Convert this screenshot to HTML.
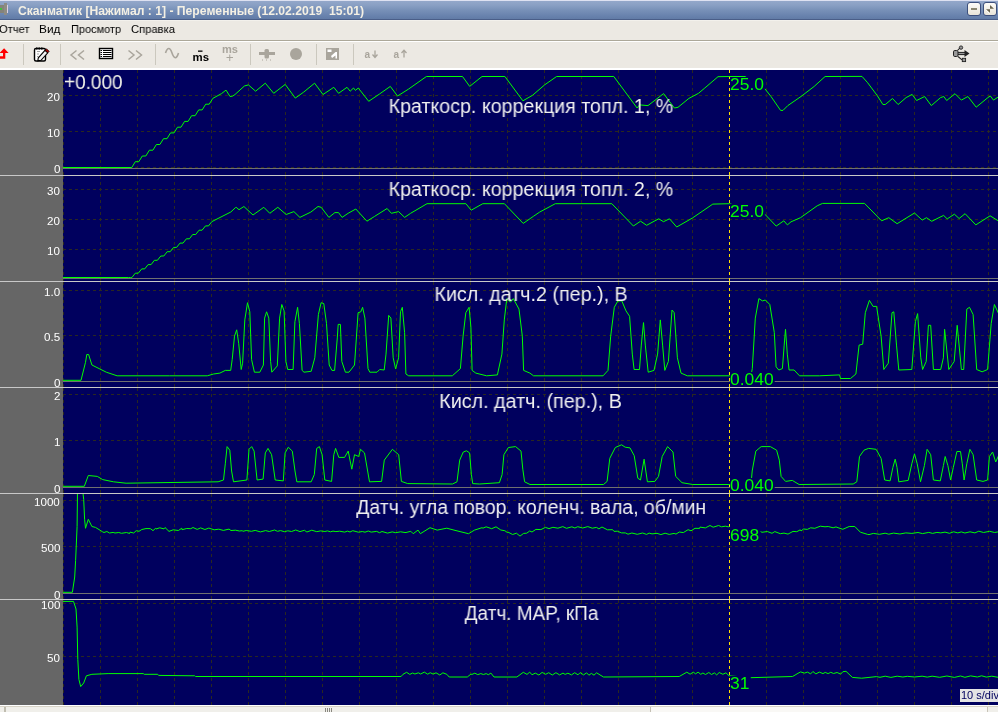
<!DOCTYPE html><html><head><meta charset="utf-8"><style>
*{margin:0;padding:0;box-sizing:border-box}
html,body{width:998px;height:712px;overflow:hidden;background:#ECE9E3;font-family:"Liberation Sans", sans-serif;position:relative}
.a{position:absolute}
.t{position:absolute;white-space:nowrap;line-height:1;will-change:transform}
.ttl{position:absolute;left:63px;width:935px;text-align:center;white-space:nowrap;line-height:1;font-size:20px;color:#f0f0f0}
.ttl span{display:inline-block;will-change:transform}
.val{position:absolute;left:730px;height:14px;padding-right:1px;overflow:visible;white-space:nowrap;line-height:1;font-size:16px;color:#00ff00;background:#00005e;transform-origin:0 0;transform:scaleX(1.09);will-change:transform}
.lab{position:absolute;right:938px;white-space:nowrap;line-height:1;font-size:11.6px;color:#fff;will-change:transform}
</style></head><body>
<div class="a" style="left:0;top:0;width:998px;height:20px;background:linear-gradient(#dde1f1 0px,#dde1f1 1px,#93a7ca 1px,#8aa0c4 5px,#7891b8 10px,#6882ad 16px,#617ba6 19px,#4a5e88 19px,#4a5e88 20px)"></div>
<div class="t" style="left:18px;top:5px;font-size:12px;font-weight:bold;color:#f4f0e4;transform-origin:0 0;transform:scaleX(1.013)">Сканматик [Нажимал : 1] - Переменные (12.02.2019&nbsp;&nbsp;15:01)</div>
<div class="a" style="left:0;top:5px;width:4px;height:8px;background:#85837a"></div><div class="a" style="left:4px;top:3px;width:3px;height:12px;background:#8e8c84"></div><div class="a" style="left:7px;top:5px;width:1px;height:8px;background:#ddd0e0"></div><div class="a" style="left:0;top:8px;width:2px;height:2px;background:#40c040"></div>
<div class="a" style="left:967px;top:2px;width:14px;height:14px;border:1px solid #3c4f7c;border-radius:3px;background:linear-gradient(#fdfcf8,#e8e4d8)"></div>
<div class="a" style="left:983px;top:2px;width:14px;height:14px;border:1px solid #3c4f7c;border-radius:3px;background:linear-gradient(#fdfcf8,#e8e4d8)"></div>
<div class="a" style="left:971px;top:8px;width:6px;height:2px;background:#8a8670"></div>
<svg class="a" style="left:983px;top:2px" width="14" height="14"><path d="M7 3 L11 6.8 L7 6.8 Z M3 7.2 L7 7.2 L7 10.8 Z" fill="#6a6450"/><path d="M3.2 8.2 L6.6 11.6" stroke="#fff" stroke-width="0.9"/></svg>
<div class="a" style="left:0;top:20px;width:998px;height:1px;background:#f3f1ec"></div>
<div class="a" style="left:0;top:40px;width:998px;height:1px;background:#aca899"></div>
<div class="a" style="left:0;top:41px;width:998px;height:1px;background:#ffffff"></div>
<div class="t" style="left:-1px;top:24px;font-size:11.5px;color:#000;transform-origin:0 0;transform:scaleX(0.97)">Отчет</div>
<div class="t" style="left:39px;top:24px;font-size:11.5px;color:#000;transform-origin:0 0;transform:scaleX(1.03)">Вид</div>
<div class="t" style="left:71px;top:24px;font-size:11.5px;color:#000;transform-origin:0 0;transform:scaleX(0.955)">Просмотр</div>
<div class="t" style="left:131px;top:24px;font-size:11.5px;color:#000;transform-origin:0 0;transform:scaleX(0.975)">Справка</div>
<div class="a" style="left:0;top:68px;width:998px;height:2px;background:#ffffff"></div>
<div class="a" style="left:23px;top:44px;width:1px;height:21px;background:#cbc8be"></div>
<div class="a" style="left:60px;top:44px;width:1px;height:21px;background:#cbc8be"></div>
<div class="a" style="left:155px;top:44px;width:1px;height:21px;background:#cbc8be"></div>
<div class="a" style="left:250px;top:44px;width:1px;height:21px;background:#cbc8be"></div>
<div class="a" style="left:316px;top:44px;width:1px;height:21px;background:#cbc8be"></div>
<div class="a" style="left:353px;top:44px;width:1px;height:21px;background:#cbc8be"></div>
<svg class="a" style="left:0;top:42px;will-change:transform" width="998" height="26"><path d="M4.1 6.2 L8.6 11 L5.3 11 L5.3 16.8 L-1 16.8 L-1 14.3 L3 14.3 L3 11 L-0.4 11 Z" fill="#ff0000"/><rect x="34.5" y="6.5" width="11" height="12.5" rx="1.5" fill="#ffffff" stroke="#000" stroke-width="1.4"/><path d="M36 5.5 h1.5 v2 h-1.5z M38.5 5.5 h1.5 v2 h-1.5z M41 5.5 h1.5 v2 h-1.5z" fill="#000"/><path d="M37 9.5 h3 M37 12 h2 M37 14.5 h1.5" stroke="#888" stroke-width="0.8"/><path d="M38.3 15.8 L45 8.3 L47.8 10.8 L41 18.3 L37.8 18.8 Z" fill="#f0f0f0" stroke="#000" stroke-width="1.1"/><path d="M45 8.3 L46.5 6.8 L49.3 9.3 L47.8 10.8 Z" fill="#a00000" stroke="#000" stroke-width="0.6"/><path d="M76.5 8.5 L71 13 L76.5 17.5 M84 8.5 L78.5 13 L84 17.5" fill="none" stroke="#a9a59c" stroke-width="1.5"/><path d="M128.5 8.5 L134 13 L128.5 17.5 M136 8.5 L141.5 13 L136 17.5" fill="none" stroke="#a9a59c" stroke-width="1.5"/><rect x="99.5" y="6.5" width="13" height="10" fill="#fff" stroke="#000" stroke-width="1.4"/><path d="M100.5 8.5 h11 M100.5 10.5 h11 M100.5 12.5 h11 M100.5 14.5 h11" stroke="#000" stroke-width="1"/><path d="M102.5 8 v7" stroke="#fff" stroke-width="1"/><path d="M165.5 11 C167.5 5, 170 5, 172 11 S176.5 17.5, 178.5 11" fill="none" stroke="#a9a59c" stroke-width="1.6"/><text x="192.5" y="18.5" font-family="Liberation Sans" font-weight="bold" font-size="11" fill="#000" textLength="16.5" lengthAdjust="spacingAndGlyphs">ms</text><rect x="198" y="8.5" width="4.5" height="1.3" fill="#000"/><text x="222" y="10.5" font-family="Liberation Sans" font-weight="bold" font-size="10.5" fill="#a9a59c" textLength="16" lengthAdjust="spacingAndGlyphs">ms</text><path d="M226.5 15.5 h6.5 M229.75 12.5 v6.5" stroke="#a9a59c" stroke-width="1"/><rect x="259" y="10" width="16" height="3" fill="#a9a59c"/><rect x="264.5" y="7" width="4.5" height="9.5" rx="1.5" fill="#a9a59c"/><path d="M262 18 h1 M266 18 h1 M270 18 h1" stroke="#a9a59c" stroke-width="1"/><circle cx="296" cy="12" r="6" fill="#a9a59c"/><rect x="326" y="6" width="13" height="12" fill="#a9a59c"/><path d="M327.5 7.5 h4 v2.5 h-4z M331 14 L335.5 10 h1.5 v6.5 h-1.5 v-3 L332 16 Z" fill="#fff"/><text x="364.5" y="15.8" font-family="Liberation Sans" font-weight="bold" font-size="10" fill="#a9a59c">a</text><path d="M375 8.5 v6.5 M372.5 12.5 L375 15.5 L377.5 12.5" fill="none" stroke="#a9a59c" stroke-width="1.3"/><text x="393.5" y="15.8" font-family="Liberation Sans" font-weight="bold" font-size="10" fill="#a9a59c">a</text><path d="M404 8.5 v7 M401.5 11 L404 8.3 L406.5 11" fill="none" stroke="#a9a59c" stroke-width="1.3"/><g><path d="M957 11.5 H965.5" stroke="#222" stroke-width="3.2"/><path d="M957 11.5 H965.5" stroke="#999" stroke-width="1.2"/><path d="M964.5 8 L969.5 11.5 L964.5 15 Z" fill="#222"/><rect x="953.5" y="8.5" width="4.5" height="6" rx="1.3" fill="#999" stroke="#222" stroke-width="1"/><path d="M957.5 8.5 L960 5.8" stroke="#222" stroke-width="1.1"/><circle cx="961" cy="5.6" r="1.7" fill="#999" stroke="#222" stroke-width="0.9"/><path d="M958 14.5 L962 17.8" stroke="#222" stroke-width="1.1"/><rect x="962.3" y="16.3" width="3.3" height="3.3" fill="#999" stroke="#222" stroke-width="0.9"/></g></svg>
<div class="a" style="left:0;top:70px;width:63px;height:635px;background:#666666"></div>
<div class="a" style="left:63px;top:70px;width:935px;height:635px;background:#00005e"></div>
<svg class="a" style="left:0;top:0" width="998" height="712"><g shape-rendering="crispEdges"><line x1="63.5" y1="70" x2="63.5" y2="175" stroke="#2a2820" stroke-width="1" stroke-dasharray="3 3"/><line x1="100.5" y1="70" x2="100.5" y2="175" stroke="#2a2820" stroke-width="1" stroke-dasharray="3 3"/><line x1="137.5" y1="70" x2="137.5" y2="175" stroke="#2a2820" stroke-width="1" stroke-dasharray="3 3"/><line x1="174.5" y1="70" x2="174.5" y2="175" stroke="#2a2820" stroke-width="1" stroke-dasharray="3 3"/><line x1="211.5" y1="70" x2="211.5" y2="175" stroke="#2a2820" stroke-width="1" stroke-dasharray="3 3"/><line x1="248.5" y1="70" x2="248.5" y2="175" stroke="#2a2820" stroke-width="1" stroke-dasharray="3 3"/><line x1="285.5" y1="70" x2="285.5" y2="175" stroke="#2a2820" stroke-width="1" stroke-dasharray="3 3"/><line x1="322.5" y1="70" x2="322.5" y2="175" stroke="#2a2820" stroke-width="1" stroke-dasharray="3 3"/><line x1="359.5" y1="70" x2="359.5" y2="175" stroke="#2a2820" stroke-width="1" stroke-dasharray="3 3"/><line x1="396.5" y1="70" x2="396.5" y2="175" stroke="#2a2820" stroke-width="1" stroke-dasharray="3 3"/><line x1="433.5" y1="70" x2="433.5" y2="175" stroke="#2a2820" stroke-width="1" stroke-dasharray="3 3"/><line x1="470.5" y1="70" x2="470.5" y2="175" stroke="#2a2820" stroke-width="1" stroke-dasharray="3 3"/><line x1="507.5" y1="70" x2="507.5" y2="175" stroke="#2a2820" stroke-width="1" stroke-dasharray="3 3"/><line x1="544.5" y1="70" x2="544.5" y2="175" stroke="#2a2820" stroke-width="1" stroke-dasharray="3 3"/><line x1="581.5" y1="70" x2="581.5" y2="175" stroke="#2a2820" stroke-width="1" stroke-dasharray="3 3"/><line x1="618.5" y1="70" x2="618.5" y2="175" stroke="#2a2820" stroke-width="1" stroke-dasharray="3 3"/><line x1="655.5" y1="70" x2="655.5" y2="175" stroke="#2a2820" stroke-width="1" stroke-dasharray="3 3"/><line x1="692.5" y1="70" x2="692.5" y2="175" stroke="#2a2820" stroke-width="1" stroke-dasharray="3 3"/><line x1="729.5" y1="70" x2="729.5" y2="175" stroke="#2a2820" stroke-width="1" stroke-dasharray="3 3"/><line x1="766.5" y1="70" x2="766.5" y2="175" stroke="#2a2820" stroke-width="1" stroke-dasharray="3 3"/><line x1="803.5" y1="70" x2="803.5" y2="175" stroke="#2a2820" stroke-width="1" stroke-dasharray="3 3"/><line x1="840.5" y1="70" x2="840.5" y2="175" stroke="#2a2820" stroke-width="1" stroke-dasharray="3 3"/><line x1="877.5" y1="70" x2="877.5" y2="175" stroke="#2a2820" stroke-width="1" stroke-dasharray="3 3"/><line x1="914.5" y1="70" x2="914.5" y2="175" stroke="#2a2820" stroke-width="1" stroke-dasharray="3 3"/><line x1="951.5" y1="70" x2="951.5" y2="175" stroke="#2a2820" stroke-width="1" stroke-dasharray="3 3"/><line x1="988.5" y1="70" x2="988.5" y2="175" stroke="#2a2820" stroke-width="1" stroke-dasharray="3 3"/><line x1="63" y1="95.5" x2="998" y2="95.5" stroke="#2a2820" stroke-width="1" stroke-dasharray="3 3"/><line x1="63" y1="131.5" x2="998" y2="131.5" stroke="#2a2820" stroke-width="1" stroke-dasharray="3 3"/><line x1="63" y1="167.5" x2="998" y2="167.5" stroke="#2a2820" stroke-width="1" stroke-dasharray="3 3"/><line x1="63" y1="168.5" x2="998" y2="168.5" stroke="#707070" stroke-width="1"/><line x1="0" y1="175.5" x2="998" y2="175.5" stroke="#c8c8c8" stroke-width="1"/><line x1="729.5" y1="70" x2="729.5" y2="175" stroke="#ffe000" stroke-width="1" stroke-dasharray="3 3"/><line x1="63.5" y1="176" x2="63.5" y2="281" stroke="#2a2820" stroke-width="1" stroke-dasharray="3 3"/><line x1="100.5" y1="176" x2="100.5" y2="281" stroke="#2a2820" stroke-width="1" stroke-dasharray="3 3"/><line x1="137.5" y1="176" x2="137.5" y2="281" stroke="#2a2820" stroke-width="1" stroke-dasharray="3 3"/><line x1="174.5" y1="176" x2="174.5" y2="281" stroke="#2a2820" stroke-width="1" stroke-dasharray="3 3"/><line x1="211.5" y1="176" x2="211.5" y2="281" stroke="#2a2820" stroke-width="1" stroke-dasharray="3 3"/><line x1="248.5" y1="176" x2="248.5" y2="281" stroke="#2a2820" stroke-width="1" stroke-dasharray="3 3"/><line x1="285.5" y1="176" x2="285.5" y2="281" stroke="#2a2820" stroke-width="1" stroke-dasharray="3 3"/><line x1="322.5" y1="176" x2="322.5" y2="281" stroke="#2a2820" stroke-width="1" stroke-dasharray="3 3"/><line x1="359.5" y1="176" x2="359.5" y2="281" stroke="#2a2820" stroke-width="1" stroke-dasharray="3 3"/><line x1="396.5" y1="176" x2="396.5" y2="281" stroke="#2a2820" stroke-width="1" stroke-dasharray="3 3"/><line x1="433.5" y1="176" x2="433.5" y2="281" stroke="#2a2820" stroke-width="1" stroke-dasharray="3 3"/><line x1="470.5" y1="176" x2="470.5" y2="281" stroke="#2a2820" stroke-width="1" stroke-dasharray="3 3"/><line x1="507.5" y1="176" x2="507.5" y2="281" stroke="#2a2820" stroke-width="1" stroke-dasharray="3 3"/><line x1="544.5" y1="176" x2="544.5" y2="281" stroke="#2a2820" stroke-width="1" stroke-dasharray="3 3"/><line x1="581.5" y1="176" x2="581.5" y2="281" stroke="#2a2820" stroke-width="1" stroke-dasharray="3 3"/><line x1="618.5" y1="176" x2="618.5" y2="281" stroke="#2a2820" stroke-width="1" stroke-dasharray="3 3"/><line x1="655.5" y1="176" x2="655.5" y2="281" stroke="#2a2820" stroke-width="1" stroke-dasharray="3 3"/><line x1="692.5" y1="176" x2="692.5" y2="281" stroke="#2a2820" stroke-width="1" stroke-dasharray="3 3"/><line x1="729.5" y1="176" x2="729.5" y2="281" stroke="#2a2820" stroke-width="1" stroke-dasharray="3 3"/><line x1="766.5" y1="176" x2="766.5" y2="281" stroke="#2a2820" stroke-width="1" stroke-dasharray="3 3"/><line x1="803.5" y1="176" x2="803.5" y2="281" stroke="#2a2820" stroke-width="1" stroke-dasharray="3 3"/><line x1="840.5" y1="176" x2="840.5" y2="281" stroke="#2a2820" stroke-width="1" stroke-dasharray="3 3"/><line x1="877.5" y1="176" x2="877.5" y2="281" stroke="#2a2820" stroke-width="1" stroke-dasharray="3 3"/><line x1="914.5" y1="176" x2="914.5" y2="281" stroke="#2a2820" stroke-width="1" stroke-dasharray="3 3"/><line x1="951.5" y1="176" x2="951.5" y2="281" stroke="#2a2820" stroke-width="1" stroke-dasharray="3 3"/><line x1="988.5" y1="176" x2="988.5" y2="281" stroke="#2a2820" stroke-width="1" stroke-dasharray="3 3"/><line x1="63" y1="189.5" x2="998" y2="189.5" stroke="#2a2820" stroke-width="1" stroke-dasharray="3 3"/><line x1="63" y1="219.5" x2="998" y2="219.5" stroke="#2a2820" stroke-width="1" stroke-dasharray="3 3"/><line x1="63" y1="249.5" x2="998" y2="249.5" stroke="#2a2820" stroke-width="1" stroke-dasharray="3 3"/><line x1="63" y1="278.5" x2="998" y2="278.5" stroke="#707070" stroke-width="1"/><line x1="0" y1="281.5" x2="998" y2="281.5" stroke="#c8c8c8" stroke-width="1"/><line x1="729.5" y1="176" x2="729.5" y2="281" stroke="#ffe000" stroke-width="1" stroke-dasharray="3 3"/><line x1="63.5" y1="282" x2="63.5" y2="387" stroke="#2a2820" stroke-width="1" stroke-dasharray="3 3"/><line x1="100.5" y1="282" x2="100.5" y2="387" stroke="#2a2820" stroke-width="1" stroke-dasharray="3 3"/><line x1="137.5" y1="282" x2="137.5" y2="387" stroke="#2a2820" stroke-width="1" stroke-dasharray="3 3"/><line x1="174.5" y1="282" x2="174.5" y2="387" stroke="#2a2820" stroke-width="1" stroke-dasharray="3 3"/><line x1="211.5" y1="282" x2="211.5" y2="387" stroke="#2a2820" stroke-width="1" stroke-dasharray="3 3"/><line x1="248.5" y1="282" x2="248.5" y2="387" stroke="#2a2820" stroke-width="1" stroke-dasharray="3 3"/><line x1="285.5" y1="282" x2="285.5" y2="387" stroke="#2a2820" stroke-width="1" stroke-dasharray="3 3"/><line x1="322.5" y1="282" x2="322.5" y2="387" stroke="#2a2820" stroke-width="1" stroke-dasharray="3 3"/><line x1="359.5" y1="282" x2="359.5" y2="387" stroke="#2a2820" stroke-width="1" stroke-dasharray="3 3"/><line x1="396.5" y1="282" x2="396.5" y2="387" stroke="#2a2820" stroke-width="1" stroke-dasharray="3 3"/><line x1="433.5" y1="282" x2="433.5" y2="387" stroke="#2a2820" stroke-width="1" stroke-dasharray="3 3"/><line x1="470.5" y1="282" x2="470.5" y2="387" stroke="#2a2820" stroke-width="1" stroke-dasharray="3 3"/><line x1="507.5" y1="282" x2="507.5" y2="387" stroke="#2a2820" stroke-width="1" stroke-dasharray="3 3"/><line x1="544.5" y1="282" x2="544.5" y2="387" stroke="#2a2820" stroke-width="1" stroke-dasharray="3 3"/><line x1="581.5" y1="282" x2="581.5" y2="387" stroke="#2a2820" stroke-width="1" stroke-dasharray="3 3"/><line x1="618.5" y1="282" x2="618.5" y2="387" stroke="#2a2820" stroke-width="1" stroke-dasharray="3 3"/><line x1="655.5" y1="282" x2="655.5" y2="387" stroke="#2a2820" stroke-width="1" stroke-dasharray="3 3"/><line x1="692.5" y1="282" x2="692.5" y2="387" stroke="#2a2820" stroke-width="1" stroke-dasharray="3 3"/><line x1="729.5" y1="282" x2="729.5" y2="387" stroke="#2a2820" stroke-width="1" stroke-dasharray="3 3"/><line x1="766.5" y1="282" x2="766.5" y2="387" stroke="#2a2820" stroke-width="1" stroke-dasharray="3 3"/><line x1="803.5" y1="282" x2="803.5" y2="387" stroke="#2a2820" stroke-width="1" stroke-dasharray="3 3"/><line x1="840.5" y1="282" x2="840.5" y2="387" stroke="#2a2820" stroke-width="1" stroke-dasharray="3 3"/><line x1="877.5" y1="282" x2="877.5" y2="387" stroke="#2a2820" stroke-width="1" stroke-dasharray="3 3"/><line x1="914.5" y1="282" x2="914.5" y2="387" stroke="#2a2820" stroke-width="1" stroke-dasharray="3 3"/><line x1="951.5" y1="282" x2="951.5" y2="387" stroke="#2a2820" stroke-width="1" stroke-dasharray="3 3"/><line x1="988.5" y1="282" x2="988.5" y2="387" stroke="#2a2820" stroke-width="1" stroke-dasharray="3 3"/><line x1="63" y1="290.5" x2="998" y2="290.5" stroke="#2a2820" stroke-width="1" stroke-dasharray="3 3"/><line x1="63" y1="335.5" x2="998" y2="335.5" stroke="#2a2820" stroke-width="1" stroke-dasharray="3 3"/><line x1="63" y1="381.5" x2="998" y2="381.5" stroke="#2a2820" stroke-width="1" stroke-dasharray="3 3"/><line x1="63" y1="381.5" x2="998" y2="381.5" stroke="#707070" stroke-width="1"/><line x1="0" y1="387.5" x2="998" y2="387.5" stroke="#c8c8c8" stroke-width="1"/><line x1="729.5" y1="282" x2="729.5" y2="387" stroke="#ffe000" stroke-width="1" stroke-dasharray="3 3"/><line x1="63.5" y1="388" x2="63.5" y2="493" stroke="#2a2820" stroke-width="1" stroke-dasharray="3 3"/><line x1="100.5" y1="388" x2="100.5" y2="493" stroke="#2a2820" stroke-width="1" stroke-dasharray="3 3"/><line x1="137.5" y1="388" x2="137.5" y2="493" stroke="#2a2820" stroke-width="1" stroke-dasharray="3 3"/><line x1="174.5" y1="388" x2="174.5" y2="493" stroke="#2a2820" stroke-width="1" stroke-dasharray="3 3"/><line x1="211.5" y1="388" x2="211.5" y2="493" stroke="#2a2820" stroke-width="1" stroke-dasharray="3 3"/><line x1="248.5" y1="388" x2="248.5" y2="493" stroke="#2a2820" stroke-width="1" stroke-dasharray="3 3"/><line x1="285.5" y1="388" x2="285.5" y2="493" stroke="#2a2820" stroke-width="1" stroke-dasharray="3 3"/><line x1="322.5" y1="388" x2="322.5" y2="493" stroke="#2a2820" stroke-width="1" stroke-dasharray="3 3"/><line x1="359.5" y1="388" x2="359.5" y2="493" stroke="#2a2820" stroke-width="1" stroke-dasharray="3 3"/><line x1="396.5" y1="388" x2="396.5" y2="493" stroke="#2a2820" stroke-width="1" stroke-dasharray="3 3"/><line x1="433.5" y1="388" x2="433.5" y2="493" stroke="#2a2820" stroke-width="1" stroke-dasharray="3 3"/><line x1="470.5" y1="388" x2="470.5" y2="493" stroke="#2a2820" stroke-width="1" stroke-dasharray="3 3"/><line x1="507.5" y1="388" x2="507.5" y2="493" stroke="#2a2820" stroke-width="1" stroke-dasharray="3 3"/><line x1="544.5" y1="388" x2="544.5" y2="493" stroke="#2a2820" stroke-width="1" stroke-dasharray="3 3"/><line x1="581.5" y1="388" x2="581.5" y2="493" stroke="#2a2820" stroke-width="1" stroke-dasharray="3 3"/><line x1="618.5" y1="388" x2="618.5" y2="493" stroke="#2a2820" stroke-width="1" stroke-dasharray="3 3"/><line x1="655.5" y1="388" x2="655.5" y2="493" stroke="#2a2820" stroke-width="1" stroke-dasharray="3 3"/><line x1="692.5" y1="388" x2="692.5" y2="493" stroke="#2a2820" stroke-width="1" stroke-dasharray="3 3"/><line x1="729.5" y1="388" x2="729.5" y2="493" stroke="#2a2820" stroke-width="1" stroke-dasharray="3 3"/><line x1="766.5" y1="388" x2="766.5" y2="493" stroke="#2a2820" stroke-width="1" stroke-dasharray="3 3"/><line x1="803.5" y1="388" x2="803.5" y2="493" stroke="#2a2820" stroke-width="1" stroke-dasharray="3 3"/><line x1="840.5" y1="388" x2="840.5" y2="493" stroke="#2a2820" stroke-width="1" stroke-dasharray="3 3"/><line x1="877.5" y1="388" x2="877.5" y2="493" stroke="#2a2820" stroke-width="1" stroke-dasharray="3 3"/><line x1="914.5" y1="388" x2="914.5" y2="493" stroke="#2a2820" stroke-width="1" stroke-dasharray="3 3"/><line x1="951.5" y1="388" x2="951.5" y2="493" stroke="#2a2820" stroke-width="1" stroke-dasharray="3 3"/><line x1="988.5" y1="388" x2="988.5" y2="493" stroke="#2a2820" stroke-width="1" stroke-dasharray="3 3"/><line x1="63" y1="394.5" x2="998" y2="394.5" stroke="#2a2820" stroke-width="1" stroke-dasharray="3 3"/><line x1="63" y1="440.5" x2="998" y2="440.5" stroke="#2a2820" stroke-width="1" stroke-dasharray="3 3"/><line x1="63" y1="487.5" x2="998" y2="487.5" stroke="#2a2820" stroke-width="1" stroke-dasharray="3 3"/><line x1="63" y1="487.5" x2="998" y2="487.5" stroke="#707070" stroke-width="1"/><line x1="0" y1="493.5" x2="998" y2="493.5" stroke="#c8c8c8" stroke-width="1"/><line x1="729.5" y1="388" x2="729.5" y2="493" stroke="#ffe000" stroke-width="1" stroke-dasharray="3 3"/><line x1="63.5" y1="494" x2="63.5" y2="599" stroke="#2a2820" stroke-width="1" stroke-dasharray="3 3"/><line x1="100.5" y1="494" x2="100.5" y2="599" stroke="#2a2820" stroke-width="1" stroke-dasharray="3 3"/><line x1="137.5" y1="494" x2="137.5" y2="599" stroke="#2a2820" stroke-width="1" stroke-dasharray="3 3"/><line x1="174.5" y1="494" x2="174.5" y2="599" stroke="#2a2820" stroke-width="1" stroke-dasharray="3 3"/><line x1="211.5" y1="494" x2="211.5" y2="599" stroke="#2a2820" stroke-width="1" stroke-dasharray="3 3"/><line x1="248.5" y1="494" x2="248.5" y2="599" stroke="#2a2820" stroke-width="1" stroke-dasharray="3 3"/><line x1="285.5" y1="494" x2="285.5" y2="599" stroke="#2a2820" stroke-width="1" stroke-dasharray="3 3"/><line x1="322.5" y1="494" x2="322.5" y2="599" stroke="#2a2820" stroke-width="1" stroke-dasharray="3 3"/><line x1="359.5" y1="494" x2="359.5" y2="599" stroke="#2a2820" stroke-width="1" stroke-dasharray="3 3"/><line x1="396.5" y1="494" x2="396.5" y2="599" stroke="#2a2820" stroke-width="1" stroke-dasharray="3 3"/><line x1="433.5" y1="494" x2="433.5" y2="599" stroke="#2a2820" stroke-width="1" stroke-dasharray="3 3"/><line x1="470.5" y1="494" x2="470.5" y2="599" stroke="#2a2820" stroke-width="1" stroke-dasharray="3 3"/><line x1="507.5" y1="494" x2="507.5" y2="599" stroke="#2a2820" stroke-width="1" stroke-dasharray="3 3"/><line x1="544.5" y1="494" x2="544.5" y2="599" stroke="#2a2820" stroke-width="1" stroke-dasharray="3 3"/><line x1="581.5" y1="494" x2="581.5" y2="599" stroke="#2a2820" stroke-width="1" stroke-dasharray="3 3"/><line x1="618.5" y1="494" x2="618.5" y2="599" stroke="#2a2820" stroke-width="1" stroke-dasharray="3 3"/><line x1="655.5" y1="494" x2="655.5" y2="599" stroke="#2a2820" stroke-width="1" stroke-dasharray="3 3"/><line x1="692.5" y1="494" x2="692.5" y2="599" stroke="#2a2820" stroke-width="1" stroke-dasharray="3 3"/><line x1="729.5" y1="494" x2="729.5" y2="599" stroke="#2a2820" stroke-width="1" stroke-dasharray="3 3"/><line x1="766.5" y1="494" x2="766.5" y2="599" stroke="#2a2820" stroke-width="1" stroke-dasharray="3 3"/><line x1="803.5" y1="494" x2="803.5" y2="599" stroke="#2a2820" stroke-width="1" stroke-dasharray="3 3"/><line x1="840.5" y1="494" x2="840.5" y2="599" stroke="#2a2820" stroke-width="1" stroke-dasharray="3 3"/><line x1="877.5" y1="494" x2="877.5" y2="599" stroke="#2a2820" stroke-width="1" stroke-dasharray="3 3"/><line x1="914.5" y1="494" x2="914.5" y2="599" stroke="#2a2820" stroke-width="1" stroke-dasharray="3 3"/><line x1="951.5" y1="494" x2="951.5" y2="599" stroke="#2a2820" stroke-width="1" stroke-dasharray="3 3"/><line x1="988.5" y1="494" x2="988.5" y2="599" stroke="#2a2820" stroke-width="1" stroke-dasharray="3 3"/><line x1="63" y1="500.5" x2="998" y2="500.5" stroke="#2a2820" stroke-width="1" stroke-dasharray="3 3"/><line x1="63" y1="546.5" x2="998" y2="546.5" stroke="#2a2820" stroke-width="1" stroke-dasharray="3 3"/><line x1="63" y1="593.5" x2="998" y2="593.5" stroke="#2a2820" stroke-width="1" stroke-dasharray="3 3"/><line x1="63" y1="593.5" x2="998" y2="593.5" stroke="#707070" stroke-width="1"/><line x1="0" y1="599.5" x2="998" y2="599.5" stroke="#c8c8c8" stroke-width="1"/><line x1="729.5" y1="494" x2="729.5" y2="599" stroke="#ffe000" stroke-width="1" stroke-dasharray="3 3"/><line x1="63.5" y1="600" x2="63.5" y2="705" stroke="#2a2820" stroke-width="1" stroke-dasharray="3 3"/><line x1="100.5" y1="600" x2="100.5" y2="705" stroke="#2a2820" stroke-width="1" stroke-dasharray="3 3"/><line x1="137.5" y1="600" x2="137.5" y2="705" stroke="#2a2820" stroke-width="1" stroke-dasharray="3 3"/><line x1="174.5" y1="600" x2="174.5" y2="705" stroke="#2a2820" stroke-width="1" stroke-dasharray="3 3"/><line x1="211.5" y1="600" x2="211.5" y2="705" stroke="#2a2820" stroke-width="1" stroke-dasharray="3 3"/><line x1="248.5" y1="600" x2="248.5" y2="705" stroke="#2a2820" stroke-width="1" stroke-dasharray="3 3"/><line x1="285.5" y1="600" x2="285.5" y2="705" stroke="#2a2820" stroke-width="1" stroke-dasharray="3 3"/><line x1="322.5" y1="600" x2="322.5" y2="705" stroke="#2a2820" stroke-width="1" stroke-dasharray="3 3"/><line x1="359.5" y1="600" x2="359.5" y2="705" stroke="#2a2820" stroke-width="1" stroke-dasharray="3 3"/><line x1="396.5" y1="600" x2="396.5" y2="705" stroke="#2a2820" stroke-width="1" stroke-dasharray="3 3"/><line x1="433.5" y1="600" x2="433.5" y2="705" stroke="#2a2820" stroke-width="1" stroke-dasharray="3 3"/><line x1="470.5" y1="600" x2="470.5" y2="705" stroke="#2a2820" stroke-width="1" stroke-dasharray="3 3"/><line x1="507.5" y1="600" x2="507.5" y2="705" stroke="#2a2820" stroke-width="1" stroke-dasharray="3 3"/><line x1="544.5" y1="600" x2="544.5" y2="705" stroke="#2a2820" stroke-width="1" stroke-dasharray="3 3"/><line x1="581.5" y1="600" x2="581.5" y2="705" stroke="#2a2820" stroke-width="1" stroke-dasharray="3 3"/><line x1="618.5" y1="600" x2="618.5" y2="705" stroke="#2a2820" stroke-width="1" stroke-dasharray="3 3"/><line x1="655.5" y1="600" x2="655.5" y2="705" stroke="#2a2820" stroke-width="1" stroke-dasharray="3 3"/><line x1="692.5" y1="600" x2="692.5" y2="705" stroke="#2a2820" stroke-width="1" stroke-dasharray="3 3"/><line x1="729.5" y1="600" x2="729.5" y2="705" stroke="#2a2820" stroke-width="1" stroke-dasharray="3 3"/><line x1="766.5" y1="600" x2="766.5" y2="705" stroke="#2a2820" stroke-width="1" stroke-dasharray="3 3"/><line x1="803.5" y1="600" x2="803.5" y2="705" stroke="#2a2820" stroke-width="1" stroke-dasharray="3 3"/><line x1="840.5" y1="600" x2="840.5" y2="705" stroke="#2a2820" stroke-width="1" stroke-dasharray="3 3"/><line x1="877.5" y1="600" x2="877.5" y2="705" stroke="#2a2820" stroke-width="1" stroke-dasharray="3 3"/><line x1="914.5" y1="600" x2="914.5" y2="705" stroke="#2a2820" stroke-width="1" stroke-dasharray="3 3"/><line x1="951.5" y1="600" x2="951.5" y2="705" stroke="#2a2820" stroke-width="1" stroke-dasharray="3 3"/><line x1="988.5" y1="600" x2="988.5" y2="705" stroke="#2a2820" stroke-width="1" stroke-dasharray="3 3"/><line x1="63" y1="603.5" x2="998" y2="603.5" stroke="#2a2820" stroke-width="1" stroke-dasharray="3 3"/><line x1="63" y1="656.5" x2="998" y2="656.5" stroke="#2a2820" stroke-width="1" stroke-dasharray="3 3"/><line x1="729.5" y1="600" x2="729.5" y2="705" stroke="#ffe000" stroke-width="1" stroke-dasharray="3 3"/></g><defs><clipPath id="c0"><rect x="63" y="70" width="935" height="105"/></clipPath><clipPath id="c1"><rect x="63" y="176" width="935" height="105"/></clipPath><clipPath id="c2"><rect x="63" y="282" width="935" height="105"/></clipPath><clipPath id="c3"><rect x="63" y="388" width="935" height="105"/></clipPath><clipPath id="c4"><rect x="63" y="494" width="935" height="105"/></clipPath><clipPath id="c5"><rect x="63" y="600" width="935" height="105"/></clipPath></defs><polyline clip-path="url(#c0)" points="63.0,167.5 128.0,167.5 130.0,167.5 131.8,167.5 135.3,161.7 138.8,161.7 142.3,156.0 145.8,156.0 149.4,150.2 152.9,150.2 156.4,144.5 159.9,144.5 163.5,138.7 167.0,138.7 170.5,132.9 174.0,132.9 177.5,127.2 181.0,127.2 184.6,121.4 188.1,121.4 191.6,115.7 195.1,115.7 198.7,109.9 202.2,109.9 205.7,104.2 209.2,104.2 212.8,98.4 221.5,93.6 226.0,90.1 230.0,96.5 232.5,96.2 235.0,94.5 244.4,86.0 248.4,84.9 255.6,91.2 265.3,83.2 273.7,93.3 285.2,84.4 295.3,98.1 303.7,92.1 314.6,83.2 323.0,94.5 333.8,87.3 338.6,93.3 347.0,87.3 350.2,91.2 353.5,88.0 355.4,90.4 358.3,88.0 368.7,101.3 379.5,94.0 390.3,86.4 397.5,96.0 408.4,89.2 426.4,76.5 462.5,76.5 469.7,86.4 482.0,76.5 504.9,76.5 522.9,100.8 532.5,95.3 544.6,84.9 556.6,76.5 613.8,76.5 637.1,108.0 639.6,104.9 648.0,105.6 663.6,93.6 674.4,108.0 678.0,107.3 688.9,98.4 698.5,93.3 704.8,88.0 718.0,76.7 729.3,76.5 745.0,76.5 764.9,88.8 771.0,96.5 780.6,110.4 783.0,110.4 787.8,105.6 801.0,96.5 814.2,86.4 825.1,76.5 862.0,76.4 867.7,82.8 877.3,95.7 882.9,104.5 885.3,104.5 892.5,98.5 898.1,104.5 906.1,97.6 912.1,94.4 916.6,100.5 924.6,96.5 931.3,105.6 940.6,97.6 943.8,96.5 946.7,100.5 955.0,93.7 961.4,100.1 967.9,96.5 976.2,107.2 987.9,97.6 990.3,96.0 993.5,100.1 999.0,96.5" fill="none" stroke="#00ff00" stroke-width="1" stroke-linejoin="round"/><polyline clip-path="url(#c1)" points="63.0,277.5 128.5,277.5 130.4,277.5 131.9,277.5 135.3,273.2 138.3,273.2 141.7,268.9 144.7,268.9 148.1,264.6 151.1,264.6 154.4,260.3 157.4,260.3 160.8,256.0 163.8,256.0 167.2,251.7 170.2,251.7 173.6,247.4 176.6,247.4 180.0,243.1 183.0,243.1 186.4,238.8 189.4,238.8 192.7,234.5 195.7,234.5 199.1,230.2 202.1,230.2 205.5,225.9 208.5,225.9 211.9,221.6 230.8,212.0 235.6,207.5 236.2,207.3 239.0,209.7 243.9,206.5 253.0,215.0 263.8,207.3 269.8,213.3 277.8,207.3 286.2,214.5 293.9,211.6 299.9,217.4 310.8,212.1 318.0,206.5 321.2,207.3 328.9,217.4 334.9,212.6 338.5,212.6 342.1,217.4 348.1,213.3 355.8,209.0 366.9,221.2 374.6,216.4 387.1,208.5 391.4,213.3 398.6,211.6 404.6,217.4 410.6,213.3 427.0,203.7 465.9,203.7 471.2,210.2 482.8,203.7 504.4,203.7 523.2,223.4 533.3,216.4 539.6,212.1 555.3,203.7 611.8,203.7 633.4,226.0 640.6,221.2 646.6,225.3 658.7,218.8 663.5,221.7 669.5,218.8 676.7,227.0 692.3,218.1 712.8,204.1 729.6,203.7 750.0,210.0 764.8,214.2 776.2,226.1 783.8,220.8 787.4,224.9 791.0,221.8 800.5,217.7 817.2,205.8 822.5,203.4 864.5,203.4 881.6,220.8 888.8,217.7 897.1,223.7 914.5,213.0 922.2,220.1 926.5,217.7 931.7,221.3 943.6,215.4 947.2,218.9 954.4,214.2 959.1,218.5 965.1,213.7 975.8,224.9 990.1,215.8 999.0,221.3" fill="none" stroke="#00ff00" stroke-width="1" stroke-linejoin="round"/><polyline clip-path="url(#c2)" points="63.0,380.3 81.0,380.3 85.5,362.3 86.8,354.5 88.6,354.5 91.9,365.0 99.1,368.6 106.3,372.2 117.1,375.8 169.4,375.8 207.3,375.8 213.6,374.0 219.9,373.1 225.3,370.4 230.7,370.4 232.2,359.6 234.5,336.1 236.7,329.8 238.7,343.3 241.2,369.5 242.6,363.2 244.8,319.9 247.5,302.7 249.8,311.8 251.6,359.6 254.4,372.2 259.8,372.2 263.4,365.0 264.6,318.1 266.6,311.8 268.8,318.1 270.6,361.4 271.8,372.2 277.3,365.9 279.6,318.1 281.8,304.5 284.1,310.9 285.9,361.4 287.7,369.5 293.1,369.5 294.9,321.7 297.6,307.3 299.4,323.5 302.1,370.4 304.0,372.2 311.2,371.3 314.8,357.8 318.4,314.5 321.1,302.7 323.8,303.6 326.5,323.5 329.2,365.0 331.9,370.4 334.6,370.4 337.3,337.9 338.2,324.4 340.4,324.4 341.8,361.4 345.4,372.2 349.0,372.2 354.5,365.0 358.1,312.7 360.8,311.8 362.6,307.3 364.9,318.1 368.0,368.6 369.8,372.2 377.0,372.2 379.7,369.5 384.2,370.0 386.0,354.1 388.7,315.4 390.9,318.1 393.2,357.8 395.6,368.9 398.6,357.8 400.5,311.8 402.3,307.3 404.6,332.5 405.9,374.0 408.7,375.8 452.3,375.8 460.4,368.6 463.1,336.1 465.8,312.7 469.1,307.3 470.9,327.1 472.1,370.4 475.8,373.1 486.6,375.8 497.4,374.9 501.9,354.1 504.3,319.9 506.8,298.6 510.4,302.2 513.3,298.6 519.0,309.1 522.3,336.1 523.6,370.4 529.9,373.1 533.5,375.8 580.0,375.8 603.1,375.8 608.0,370.4 610.7,336.1 614.3,307.3 617.9,300.9 621.8,300.9 626.0,310.9 629.6,316.3 632.3,354.1 634.1,369.5 639.5,369.5 641.3,345.1 643.5,322.6 645.3,345.1 648.2,372.2 654.0,370.4 657.6,354.1 660.3,319.9 662.6,345.1 664.8,370.4 668.4,361.4 672.0,310.0 674.2,312.7 677.4,357.8 681.0,373.1 687.3,375.8 729.7,375.8 751.0,375.8 752.3,368.6 755.3,318.1 758.9,298.6 762.5,300.9 765.3,300.0 769.8,304.5 774.3,332.5 776.1,366.8 778.8,370.0 782.4,368.6 784.2,345.1 785.5,329.3 787.3,354.1 789.1,370.0 794.1,370.0 799.5,375.8 819.4,375.8 839.6,374.9 840.5,378.5 850.5,378.5 855.9,374.0 859.1,345.1 862.7,344.2 865.3,312.7 869.4,300.4 873.0,306.4 876.6,306.4 881.1,336.1 883.8,369.5 888.3,363.2 892.0,312.7 893.8,311.8 896.5,345.1 898.8,370.0 911.8,369.5 915.4,321.7 917.6,313.6 920.8,357.8 922.6,369.5 926.2,361.4 928.4,325.3 930.7,325.3 933.4,369.5 940.7,369.5 943.4,357.8 944.6,329.3 948.8,369.5 954.2,361.4 957.2,325.3 961.4,369.5 963.7,369.5 966.8,309.1 969.5,307.3 973.1,314.5 976.7,369.5 982.1,371.8 987.6,369.5 991.2,323.5 994.4,304.5 999.0,314.5" fill="none" stroke="#00ff00" stroke-width="1" stroke-linejoin="round"/><polyline clip-path="url(#c3)" points="63.0,486.3 84.3,486.3 88.3,475.5 97.3,476.4 102.7,479.6 113.5,481.8 126.1,483.2 218.1,481.8 223.5,480.0 225.3,463.8 227.1,446.6 229.8,450.2 231.6,471.0 233.5,481.8 246.9,480.0 249.0,449.3 251.7,446.6 254.1,451.1 257.1,480.0 263.1,479.1 265.3,452.9 268.0,448.4 271.6,454.7 275.2,480.0 283.3,480.9 285.1,452.9 288.3,447.2 292.3,451.1 295.0,471.0 296.8,481.8 311.2,481.8 314.3,474.6 316.7,448.4 319.4,446.6 322.1,454.7 324.8,480.0 331.6,481.4 333.8,454.7 335.6,448.4 338.8,457.4 344.6,457.4 348.2,451.1 351.8,469.2 354.5,454.7 358.7,456.5 360.5,449.3 364.5,452.9 369.5,481.8 381.6,481.4 384.3,460.1 392.4,449.3 398.7,454.7 401.4,481.4 407.7,483.6 452.5,484.0 457.0,481.8 459.7,460.1 463.3,452.0 466.5,450.8 469.6,452.9 471.4,474.6 472.7,483.6 479.5,484.0 499.4,482.7 502.1,474.6 503.9,454.7 508.4,447.5 515.6,446.6 521.0,451.1 522.8,469.2 524.6,481.8 530.0,484.5 603.5,484.5 607.1,481.4 609.8,458.3 615.3,447.5 621.6,444.8 625.2,447.2 630.0,447.9 634.2,455.6 637.8,478.2 640.5,480.0 644.1,459.2 647.4,481.8 654.9,481.4 658.5,476.4 662.2,456.5 667.6,446.6 673.0,452.0 675.7,476.4 682.0,482.7 692.8,484.5 728.9,484.5 751.0,484.5 752.2,471.0 755.8,451.1 761.2,446.6 770.3,446.6 776.6,450.2 779.3,460.1 781.1,476.4 785.6,481.4 792.3,480.4 799.1,484.5 853.2,484.0 856.8,481.8 859.5,456.5 864.0,450.2 868.5,448.4 876.1,449.3 881.1,458.3 884.7,480.0 890.1,480.9 892.9,467.4 895.2,459.2 897.0,467.4 898.8,481.8 908.2,480.4 911.8,463.8 914.5,453.8 917.2,463.8 920.5,481.8 924.4,465.6 927.1,449.3 930.7,454.7 933.4,480.0 940.3,480.9 943.4,465.6 945.2,456.5 947.9,465.6 950.6,480.0 953.3,467.4 956.9,451.5 960.5,451.5 962.3,463.8 964.1,480.0 966.8,463.8 969.9,449.3 973.1,454.7 976.7,480.0 983.0,481.4 987.6,480.0 989.4,456.5 992.6,452.0 995.7,462.0 999.0,454.7" fill="none" stroke="#00ff00" stroke-width="1" stroke-linejoin="round"/><polyline clip-path="url(#c4)" points="63.0,592.3 72.4,592.3 74.7,577.0 75.6,560.7 77.1,526.5 77.6,480.0 81.5,480.0 83.7,499.4 84.6,519.3 85.5,528.3 88.3,519.3 91.9,526.5 95.5,527.4 102.7,531.9 104.0,532.5 106.9,531.5 109.5,533.0 113.1,532.4 115.0,533.0 118.8,532.5 121.5,533.3 126.5,532.5 129.6,533.5 130.0,532.1 133.7,533.0 136.2,530.7 139.0,531.3 141.8,529.5 146.0,528.6 150.3,528.6 153.0,530.6 155.6,528.3 156.0,529.0 159.8,527.8 164.0,528.9 165.0,527.5 169.0,531.4 173.2,529.8 178.4,530.5 181.8,528.2 182.0,529.7 186.8,528.5 190.8,528.7 193.0,527.5 197.2,529.4 200.6,527.9 204.9,529.5 208.8,528.1 214.2,529.8 218.7,529.2 223.4,530.4 229.0,529.1 231.0,530.5 235.5,530.2 239.4,531.0 242.2,530.7 243.0,531.3 246.2,530.5 251.4,531.3 255.2,530.4 260.4,531.9 265.6,530.6 269.3,531.5 274.6,530.0 277.5,531.3 280.6,530.6 284.5,531.7 287.8,530.8 291.5,531.5 295.7,530.0 300.0,531.6 304.4,530.3 306.9,532.0 311.8,530.2 316.8,531.7 320.5,530.9 324.9,531.5 327.5,530.9 330.4,531.8 333.0,531.1 335.9,531.6 339.5,531.2 344.7,532.1 347.5,531.1 350.0,532.0 352.8,530.7 358.4,532.2 362.3,531.5 365.0,532.2 368.3,531.0 371.2,532.1 376.7,531.4 379.5,532.7 382.0,531.5 387.5,533.1 392.2,531.9 395.7,532.7 400.6,531.8 405.0,532.5 406.0,532.5 410.8,531.3 413.2,533.7 418.0,530.1 420.4,533.7 430.0,527.7 437.2,530.1 446.8,528.2 454.0,530.1 468.5,533.7 474.5,530.1 482.0,527.7 483.0,528.2 486.1,526.8 491.7,528.7 496.0,526.8 500.8,530.0 504.8,530.7 507.3,532.5 508.0,532.1 512.6,534.5 516.4,533.2 520.0,536.1 523.6,533.4 526.7,533.2 529.7,531.0 532.0,532.0 535.9,529.4 540.9,529.6 545.4,527.4 549.0,528.6 552.9,527.3 557.9,528.2 562.8,526.6 566.5,528.3 571.9,526.8 574.9,528.0 577.7,526.7 582.7,528.0 587.8,526.6 592.3,528.2 596.4,527.4 598.9,528.8 602.0,527.0 607.4,529.8 612.6,529.7 614.0,531.4 617.3,531.2 621.6,532.9 625.4,532.9 628.0,534.2 631.9,533.0 637.2,534.3 642.5,533.0 646.6,534.4 649.1,533.1 652.0,533.9 657.0,533.3 660.9,534.6 665.1,533.2 669.2,534.4 674.1,533.4 676.0,534.1 679.3,532.0 683.3,532.6 688.1,529.7 691.0,530.8 695.0,528.3 699.6,528.4 700.0,527.1 705.4,527.9 710.0,525.5 713.2,527.2 718.6,525.5 721.5,526.8 725.3,526.2 728.5,526.8 729.0,526.5 729.5,526.5" fill="none" stroke="#00ff00" stroke-width="1" stroke-linejoin="round"/><polyline clip-path="url(#c4)" points="760.1,531.3 762.0,532.3 767.3,531.5 772.0,533.3 774.8,531.6 780.3,533.7 784.0,533.1 788.0,534.1 793.0,531.4 796.8,531.7 800.3,529.8 801.0,531.0 803.5,529.0 807.3,529.4 810.7,527.8 814.8,528.3 820.3,526.2 825.0,526.8 828.2,526.5 833.1,527.8 836.0,526.9 838.0,527.7 838.0,527.7 842.8,529.3 849.2,526.5 854.8,526.5 860.4,532.2 867.7,534.4 869.0,534.6 873.3,533.4 879.5,534.3 885.1,533.2 888.8,534.2 893.6,533.1 899.9,534.0 905.8,532.9 911.9,533.4 918.0,532.5 922.5,533.6 928.8,532.4 932.6,533.4 936.9,532.4 940.8,532.9 945.0,532.1 949.4,533.3 953.7,531.8 957.8,532.9 961.3,531.9 964.9,533.0 970.0,531.8 974.9,532.9 978.8,531.2 983.6,532.5 989.6,531.3 994.6,532.5 999.0,531.7" fill="none" stroke="#00ff00" stroke-width="1" stroke-linejoin="round"/><polyline clip-path="url(#c5)" points="63.0,601.4 73.5,601.4 76.0,609.0 77.1,627.1 77.8,659.5 78.9,679.4 80.7,686.6 83.7,683.0 86.4,675.8 91.9,674.3 108.1,673.6 143.3,673.6 144.2,674.3 157.7,674.3 158.6,675.4 194.7,675.8 195.6,676.5 401.1,676.5 403.0,674.3 406.6,672.3 409.8,674.4 412.6,673.0 414.9,674.0 418.3,672.8 420.7,674.0 424.3,672.1 427.7,674.2 430.2,672.7 433.1,674.1 436.0,672.8 439.8,675.0 442.9,672.8 446.8,674.3 449.2,677.0 467.3,677.0 470.9,674.1 472.0,674.4 474.8,673.2 477.8,674.6 480.8,673.6 483.4,674.5 486.2,673.6 488.3,674.7 490.9,673.1 494.0,677.0 516.9,677.0 520.0,674.7 523.3,672.3 527.0,674.4 529.7,672.1 532.0,674.8 535.3,673.1 538.9,675.0 542.1,672.4 545.7,674.3 548.7,672.7 552.3,675.0 555.9,672.7 559.6,674.9 563.0,673.1 565.1,674.4 567.9,673.2 571.5,674.9 574.7,672.7 578.0,674.8 580.1,672.6 583.6,674.9 586.6,672.8 588.9,675.2 591.4,673.4 594.0,675.2 596.5,672.8 603.5,677.0 679.2,676.5 684.0,673.8 686.8,672.2 690.1,674.2 693.3,672.2 695.6,673.8 698.1,672.2 700.8,674.3 702.9,673.0 705.5,674.5 708.8,672.5 711.5,674.5 714.4,672.9 716.7,674.9 719.2,672.5 722.9,674.3 725.9,672.8 729.0,675.8 750.5,677.7 792.6,676.5 798.0,673.3 800.6,671.9 804.4,673.1 807.5,672.1 810.6,673.9 812.9,671.5 815.9,673.9 819.3,672.1 823.0,673.6 825.2,672.4 828.1,673.6 830.8,672.3 833.5,673.5 837.1,672.5 840.6,674.1 842.9,671.7 846.0,671.3 852.4,677.4 861.7,678.2 876.5,676.6 880.0,677.3 885.2,676.2 890.9,677.4 897.2,676.2 902.9,677.0 907.3,676.3 914.5,677.0 922.1,676.2 927.2,677.1 932.1,676.2 939.7,677.3 946.9,676.0 954.4,677.4 960.5,676.0 964.9,677.3 970.7,675.9 977.3,677.0 981.6,675.8 986.3,677.1 991.7,676.2 998.6,677.4 999.0,676.6" fill="none" stroke="#00ff00" stroke-width="1" stroke-linejoin="round"/></svg>
<div class="lab" style="top:91px">20</div>
<div class="lab" style="top:127px">10</div>
<div class="lab" style="top:163px">0</div>
<div class="lab" style="top:185px">30</div>
<div class="lab" style="top:215px">20</div>
<div class="lab" style="top:245px">10</div>
<div class="lab" style="top:286px">1.0</div>
<div class="lab" style="top:331px">0.5</div>
<div class="lab" style="top:377px">0</div>
<div class="lab" style="top:390px">2</div>
<div class="lab" style="top:436px">1</div>
<div class="lab" style="top:483px">0</div>
<div class="lab" style="top:496px">1000</div>
<div class="lab" style="top:542px">500</div>
<div class="lab" style="top:589px">0</div>
<div class="lab" style="top:599px">100</div>
<div class="lab" style="top:652px">50</div>
<div class="ttl" style="top:96px;left:63px"><span style="transform:scaleX(0.982)">Краткоср. коррекция топл. 1, %</span></div>
<div class="ttl" style="top:179px;left:63px"><span style="transform:scaleX(0.982)">Краткоср. коррекция топл. 2, %</span></div>
<div class="ttl" style="top:284px;left:64px"><span style="transform:scaleX(0.985)">Кисл. датч.2 (пер.), В</span></div>
<div class="ttl" style="top:391px;left:63px"><span style="transform:scaleX(0.987)">Кисл. датч. (пер.), В</span></div>
<div class="ttl" style="top:497px;left:64px"><span style="transform:scaleX(0.971)">Датч. угла повор. коленч. вала, об/мин</span></div>
<div class="ttl" style="top:603px;left:64px"><span style="transform:scaleX(0.948)">Датч. MAP, кПа</span></div>
<div class="t" style="left:64px;top:72px;font-size:20px;color:#f0f0e8;transform-origin:0 0;transform:scaleX(0.95)">+0.000</div>
<div class="val" style="top:77px">25.0</div>
<div class="val" style="top:204px">25.0</div>
<div class="val" style="top:372px">0.040</div>
<div class="val" style="top:478px">0.040</div>
<div class="val" style="top:528px">698</div>
<div class="val" style="top:676px">31</div>
<div class="a" style="left:960px;top:689px;width:38px;height:13px;background:#e4e4e4"></div>
<div class="t" style="left:961px;top:690px;font-size:11px;color:#00005e">10 s/div</div>
<div class="a" style="left:0;top:705px;width:998px;height:1px;background:#ffffff"></div>
<div class="a" style="left:0;top:706px;width:998px;height:1px;background:#d6d2c6"></div>
<div class="a" style="left:0;top:707px;width:998px;height:5px;background:#f0efea"></div>
<div class="a" style="left:4px;top:707px;width:2px;height:5px;background:#c0bdb0"></div>
<div class="a" style="left:651px;top:707px;width:336px;height:5px;background:#f9f8f5"></div>
<div class="a" style="left:650px;top:707px;width:1px;height:5px;background:#c4c0b4"></div>
<div class="a" style="left:325px;top:708px;width:1px;height:4px;background:#8a8880"></div>
<div class="a" style="left:327px;top:708px;width:1px;height:4px;background:#8a8880"></div>
<div class="a" style="left:329px;top:708px;width:1px;height:4px;background:#8a8880"></div>
<div class="a" style="left:331px;top:708px;width:1px;height:4px;background:#8a8880"></div>
<div class="a" style="left:987px;top:707px;width:1px;height:5px;background:#c8c4b8"></div>
</body></html>
